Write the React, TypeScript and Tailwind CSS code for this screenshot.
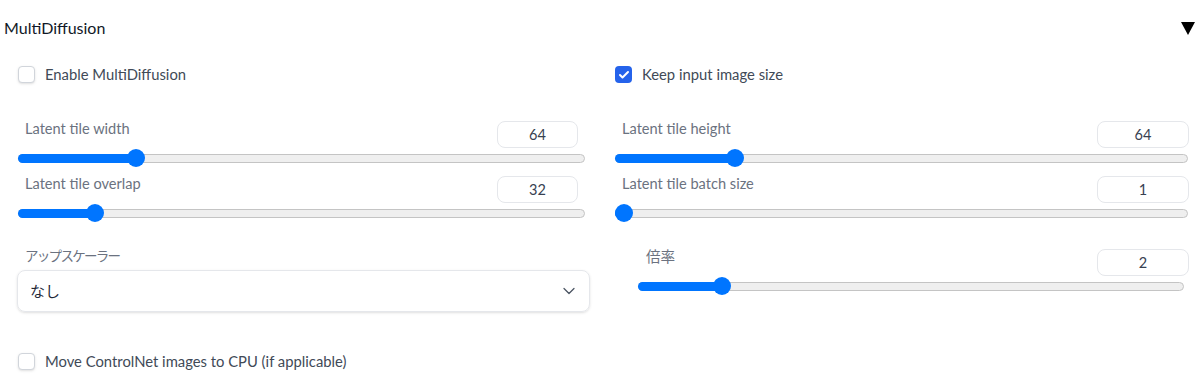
import { ChevronDown, Check } from 'lucide-react';

const font = { fontFamily: 'Lato, "Noto Sans CJK JP", sans-serif' };

function CheckBox({ checked, label }: { checked?: boolean; label: string }) {
  return (
    <label className="flex items-center gap-[10px] h-[17px]">
      {checked ? (
        <span className="w-[17px] h-[17px] rounded-[4px] bg-[#2563eb] flex items-center justify-center">
          <Check size={12} strokeWidth={4} className="text-white" />
        </span>
      ) : (
        <span className="w-[17px] h-[17px] rounded-[4px] border border-[#d1d5db] bg-white shadow-sm" />
      )}
      <span className="text-[14.8px] text-[#414a57]">{label}</span>
    </label>
  );
}

function Slider({
  label,
  value,
  pct,
  boxW,
  boxGap,
  labelPad = 'pl-[7px]',
}: {
  label: string;
  value: string;
  pct: number;
  boxW: string;
  boxGap: string;
  labelPad?: string;
}) {
  return (
    <div className="flex flex-col">
      <div className={`flex justify-between items-start ${boxGap}`}>
        <span className={`text-[14.6px] leading-4 text-[#6b7280] ${labelPad}`}>{label}</span>
        <div
          className={`${boxW} h-[27px] rounded-lg border border-[#e5e7eb] flex items-center justify-center text-[14.5px] text-[#374151]`}
        >
          {value}
        </div>
      </div>
      <div className="h-[20px] flex items-center">
        <div className="relative w-full h-[9px] rounded-full bg-[#efefef] border border-[#c4c4c4]">
          <div
            className="absolute left-[-1px] top-[-1px] bottom-[-1px] rounded-full bg-[#0075ff]"
            style={{ width: `calc(${pct} * (100% - 18px) + 9px)` }}
          />
          <div
            className="absolute top-1/2 -translate-y-1/2 w-[18px] h-[18px] rounded-full bg-[#0075ff]"
            style={{ left: `calc(${pct} * (100% - 18px) - 1px)` }}
          />
        </div>
      </div>
    </div>
  );
}

export default function App() {
  return (
    <div className="w-[1204px] h-[386px] bg-white overflow-hidden" style={font}>
      <div className="h-[56px] flex items-center justify-between pl-[4px] pr-[9px]">
        <span className="text-[16px] text-[#111827]">MultiDiffusion</span>
        <svg width="14" height="13" viewBox="0 0 14 13">
          <polygon points="0,0 14,0 7,13" fill="#000" />
        </svg>
      </div>

      <div className="grid grid-cols-2 gap-[24px] pl-[18px] pr-[16px]">
        <div className="flex flex-col">
          <div className="mt-[10px]">
            <CheckBox label="Enable MultiDiffusion" />
          </div>
          <div className="mt-[38px] w-[567px] flex flex-col gap-[8px]">
            <Slider label="Latent tile width" value="64" pct={0.2} boxW="w-[81px]" boxGap="pr-[7px]" />
            <Slider label="Latent tile overlap" value="32" pct={0.125} boxW="w-[81px]" boxGap="pr-[7px]" />
          </div>
          <div className="mt-[25px] ml-[-1px] w-[573px]">
            <div className="text-[13.5px] tracking-[-1.7px] leading-4 text-[#6b7280] pl-[8px]">アップスケーラー</div>
            <div className="mt-[6px] h-[42px] rounded-lg border border-[#e5e7eb] shadow-sm flex items-center justify-between pl-[12px] pr-[10px]">
              <span className="text-[15px] text-[#1f2937]">なし</span>
              <ChevronDown size={20} strokeWidth={1.5} className="text-[#4b5563]" />
            </div>
          </div>
        </div>

        <div className="flex flex-col">
          <div className="mt-[10px]">
            <CheckBox checked label="Keep input image size" />
          </div>
          <div className="mt-[38px] w-[573px] flex flex-col gap-[8px]">
            <Slider label="Latent tile height" value="64" pct={0.2} boxW="w-[92px]" boxGap="mr-[-1px]" />
            <Slider label="Latent tile batch size" value="1" pct={0} boxW="w-[92px]" boxGap="mr-[-1px]" />
          </div>
          <div className="mt-[26px] pl-[23px] w-[569px]">
            <Slider
              label="倍率"
              value="2"
              pct={1 / 7}
              boxW="w-[92px]"
              boxGap="mr-[-5px]"
              labelPad="pl-[8px]"
            />
          </div>
        </div>
      </div>

      <div className="pl-[18px] mt-[41px]">
        <CheckBox label="Move ControlNet images to CPU (if applicable)" />
      </div>
    </div>
  );
}
